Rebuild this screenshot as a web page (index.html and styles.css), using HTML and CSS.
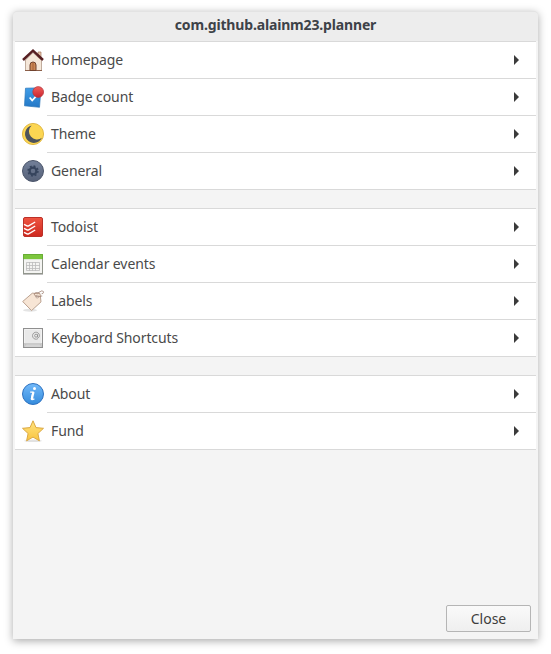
FILE: index.html
```html
<!DOCTYPE html>
<html lang="en">
<head>
<meta charset="utf-8">
<title>com.github.alainm23.planner</title>
<link rel="stylesheet" href="styles.css">
</head>
<body>
<main class="window">
  <header class="titlebar">com.github.alainm23.planner</header>
  <div class="groups">
    <section class="group">
      <div class="row"><svg class="icon" viewBox="0 0 24 24"><path d="M17 4h3v7h-3z" fill="#e8c6ab" stroke="#a4765e" stroke-width=".7"/><path d="M4.500 12 12 4.500l8.500 8v10H4.500z" fill="#f5e7d9" stroke="#b39a89" stroke-width=".8"/><path d="M4 22.500h17" stroke="#8c5f49"/><path d="M9 22.500v-5.500a3 3 0 0 1 6 0v5.500z" fill="#cb8754" stroke="#70422e"/><path d="M12 14.500v7.500" stroke="#a66139"/><path d="m2 12 10-9.300L22 12" fill="none" stroke="#571f22" stroke-width="2.500"/></svg><span class="label">Homepage</span><i class="arrow"></i></div>
      <div class="row"><svg class="icon" viewBox="0 0 24 24"><defs><linearGradient id="blue" x2="0" y2="1"><stop stop-color="#3f9de8"/><stop offset="1" stop-color="#2478c6"/></linearGradient><linearGradient id="dot" x2="0" y2="1"><stop stop-color="#f0605b"/><stop offset="1" stop-color="#ca2530"/></linearGradient></defs><path d="m4.500 3.200 15.500-.4-1.500 19.500-15-1.500z" fill="url(#blue)" stroke="#2874b8" stroke-width=".7"/><path d="m8.700 12.500 2.500 3 4-4.300" fill="none" stroke="#fff" stroke-width="1.800"/><circle cx="17.200" cy="7" r="5.400" fill="url(#dot)" stroke="#b7343b" stroke-width=".7"/></svg><span class="label">Badge count</span><i class="arrow"></i></div>
      <div class="row"><svg class="icon" viewBox="0 0 24 24"><circle cx="12" cy="12" r="10.600" fill="#fcd652" stroke="#ddb33e" stroke-width=".9"/><path d="M10.600 3.400A8.900 8.900 0 1 0 21 15.800 8.100 8.100 0 0 1 10.600 3.400z" fill="#4d535b"/></svg><span class="label">Theme</span><i class="arrow"></i></div>
      <div class="row"><svg class="icon" viewBox="0 0 24 24"><defs><linearGradient id="slate" x2="0" y2="1"><stop stop-color="#73809a"/><stop offset="1" stop-color="#566178"/></linearGradient></defs><circle cx="12" cy="12" r="10.500" fill="url(#slate)" stroke="#4c566b"/><g stroke="#36445d" fill="none"><circle cx="12" cy="12" r="3.400" stroke-width="2.200"/><circle cx="12" cy="12" r="4.900" stroke-width="1.600" stroke-dasharray="1.900 1.948"/></g></svg><span class="label">General</span><i class="arrow"></i></div>
    </section>
    <section class="group">
      <div class="row"><svg class="icon" viewBox="0 0 24 24"><defs><linearGradient id="red" x2="0" y2="1"><stop stop-color="#ef5542"/><stop offset="1" stop-color="#cd281e"/></linearGradient></defs><rect x="2.500" y="2.500" width="19" height="19" rx="1.500" fill="url(#red)" stroke="#bc3028"/><path d="m3 9.300 3 1.600q.8.400 1.600-.1L14.200 7M3 13.300l3 1.600q.8.400 1.600-.1l6.600-3.800M3 17.300l3 1.600q.8.400 1.600-.1l6.600-3.800" fill="none" stroke="#fff" stroke-width="1.400"/></svg><span class="label">Todoist</span><i class="arrow"></i></div>
      <div class="row"><svg class="icon" viewBox="0 0 24 24"><path d="M2 22h20" stroke="#aaa" stroke-width="1.500"/><rect x="2.500" y="2.500" width="19" height="19" fill="#f4f4f2" stroke="#91958c"/><path d="M2 2h20v5H2z" fill="#7cc63d"/><path d="M2.500 7V2.500h19V7" fill="none" stroke="#68ac36"/><path d="M3 7.500h18" stroke="#dfe9d8"/><path d="M5.500 10.500h13v8h-13zM8.500 10v9M11.500 10v9M14.500 10v9M5 13.500h14M5 16.500h14" fill="none" stroke="#bbb" stroke-width=".8"/></svg><span class="label">Calendar events</span><i class="arrow"></i></div>
      <div class="row"><svg class="icon" viewBox="0 0 24 24"><ellipse cx="9" cy="21.300" rx="7" ry="1.500" fill="#e4e4e4"/><path d="m1.700 12.500 9.600-8.300 7.700.4 1 8.300-9.500 8.700z" fill="#f7e5d5" stroke="#bba18f" stroke-linejoin="round"/><circle cx="16.200" cy="7.600" r="1.400" fill="#fff" stroke="#b09786" stroke-width=".8"/><path d="M16.200 7.500c-4-.5-3.500-4.200 0-3.800 2.500.3 3.800-2.500 5.500-1.700 1.400.7.800 3-1 2.700M16.200 7.500c2 .8 3.500-.8 5-.5" fill="none" stroke="#987969" stroke-width=".8"/></svg><span class="label">Labels</span><i class="arrow"></i></div>
      <div class="row"><svg class="icon" viewBox="0 0 24 24"><rect x="2.500" y="2.500" width="19" height="19" fill="#d4d4d4" stroke="#8f8f8f"/><path d="M3.500 17V3.500h17V17" fill="#e9e9e9" stroke="#f8f8f8" stroke-width=".8"/><path d="M3 18h18M3 21l2-3M21 21l-2-3" stroke="#bcbcbc" stroke-width=".7"/><path d="M16.600 8.300v2.500c0 1.500 1.900.8 1.900-1.100a3.500 3.500 0 1 0-1.500 2.900M16.600 9.700a1.500 1.500 0 1 1-3 0 1.500 1.500 0 0 1 3 0" fill="none" stroke="#858585" stroke-width=".75"/></svg><span class="label">Keyboard Shortcuts</span><i class="arrow"></i></div>
    </section>
    <section class="group">
      <div class="row"><svg class="icon" viewBox="0 0 24 24"><defs><linearGradient id="info" x2="0" y2="1"><stop stop-color="#73bafa"/><stop offset="1" stop-color="#348bdc"/></linearGradient></defs><circle cx="12" cy="12" r="10.500" fill="url(#info)" stroke="#2e72c0"/><circle cx="13.500" cy="6.400" r="1.500" fill="#fff"/><path d="M9.200 10.200h2.800l-1.600 6.600q-.3 1.500 3 .1" fill="none" stroke="#fff" stroke-width="1.300"/><path d="m12.500 10-1.700 7" stroke="#fff" stroke-width="2.200"/></svg><span class="label">About</span><i class="arrow"></i></div>
      <div class="row"><svg class="icon" viewBox="0 0 24 24"><defs><linearGradient id="gold" x2="0" y2="1"><stop stop-color="#ffe481"/><stop offset="1" stop-color="#f9c440"/></linearGradient></defs><ellipse cx="12" cy="21.800" rx="9" ry="1.200" fill="#e2e2e2"/><path d="m12 1.800 3 6.800 7.500.7-5.600 5.200 1.500 7.300-6.400-3.700-6.400 3.700 1.500-7.300-5.600-5.200 7.500-.7z" fill="url(#gold)" stroke="#dba843" stroke-linejoin="round"/></svg><span class="label">Fund</span><i class="arrow"></i></div>
    </section>
  </div>
  <footer class="actions"><button class="close">Close</button></footer>
</main>
</body>
</html>
```
FILE: styles.css
```css
* { box-sizing: border-box; }
body {
  margin: 0;
  padding: 11px 13px 15px;
  height: 654px;
  overflow: hidden;
  background: #fff;
  color: #4a4a4a;
  font: 14px/20px "Noto Sans", sans-serif;
  letter-spacing: -.1px;
}
.window {
  display: flex;
  flex-direction: column;
  width: 525px;
  height: 628px;
  background: #f4f4f4;
  border-radius: 4px 4px 0 0;
  box-shadow: 0 2px 8px rgba(0, 0, 0, .34);
}
.titlebar {
  height: 30px;
  background: #ededed;
  border-radius: 4px 4px 0 0;
  box-shadow: inset 0 1px #e3e3e3;
  color: #3d4248;
  font-weight: 700;
  line-height: 28px;
  letter-spacing: -.16px;
  text-align: center;
}
.groups {
  display: flex;
  flex-direction: column;
  gap: 18px;
  padding: 0 2px;
}
.group {
  border-top: 1px solid #d9d9d9;
  border-bottom: 1px solid #d9d9d9;
  background: #fff;
}
.row {
  display: flex;
  align-items: center;
  height: 37px;
  padding: 0 17px 0 6px;
  background: linear-gradient(#d9d9d9, #d9d9d9) 32px 100% / 100% 1px no-repeat;
}
.row:last-child {
  height: 36px;
  background: none;
}
.icon {
  flex: none;
  width: 24px;
  height: 24px;
}
.row:not(:last-child) .icon,
.row:not(:last-child) .arrow,
.row:not(:last-child) .label { margin-bottom: 1px; }
.label {
  flex: 1;
  padding-left: 6px;
}
.arrow {
  width: 5px;
  height: 10px;
  background: #3b3b3b;
  clip-path: polygon(0 0, 100% 50%, 0 100%);
}
.actions {
  display: flex;
  justify-content: flex-end;
  margin-top: auto;
  padding: 0 7px 7px 0;
}
.close {
  width: 85px;
  height: 27px;
  padding: 0;
  border: 1px solid #b5b5b5;
  border-radius: 2px;
  background: linear-gradient(#fafafa, #efefef);
  color: #3d3d3d;
  font: inherit;
}
```
